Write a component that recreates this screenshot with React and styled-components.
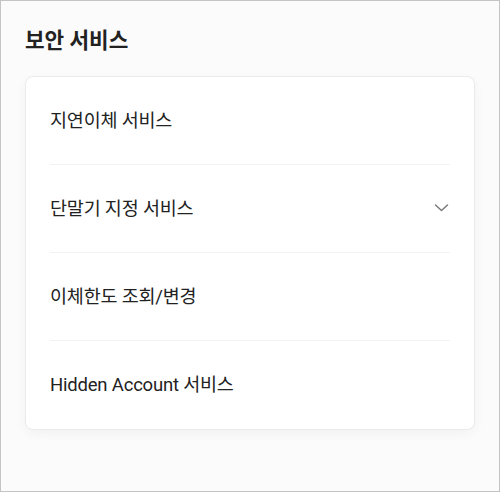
import React from "react";
import styled, { createGlobalStyle } from "styled-components";

const Global = createGlobalStyle`
  html, body { margin: 0; padding: 0; }
  body { font-family: Roboto, "Noto Sans CJK KR", sans-serif; color: #222; }
  * { box-sizing: border-box; }
`;

const Page = styled.div`
  width: 500px;
  height: 492px;
  border: 1px solid #c4c4c4;
  background: #fbfbfb;
  padding: 23px 24px 0 24px;
`;

const Title = styled.h2`
  margin: 0 0 19px 0;
  font-size: 21.3px;
  line-height: 33px;
  font-weight: 700;
  color: #222;
`;

const Card = styled.div`
  background: #fff;
  border: 1px solid #ebebeb;
  border-radius: 8px;
  box-shadow: 0 4px 12px rgba(0, 0, 0, 0.04);
  padding: 0 24px;
`;

const Row = styled.div`
  height: 88px;
  display: flex;
  align-items: center;
  justify-content: space-between;
  border-bottom: ${(p) => (p.$last ? "none" : "1px solid #f2f2f2")};
`;

const Label = styled.span`
  font-size: 18.5px;
  line-height: 24px;
  letter-spacing: -0.2px;
  color: #222;
`;

const Chevron = styled.svg`
  width: 17px;
  height: 17px;
  color: #7a7a7a;
  margin-top: -2px;
`;

const items = [
  { label: "지연이체 서비스" },
  { label: "단말기 지정 서비스", chevron: true },
  { label: "이체한도 조회/변경" },
  { label: "Hidden Account 서비스" },
];

export default function App() {
  return (
    <>
      <Global />
      <Page>
        <Title>보안 서비스</Title>
        <Card>
          {items.map((it, i) => (
            <Row key={i} $last={i === items.length - 1}>
              <Label>{it.label}</Label>
              {it.chevron && (
                <Chevron viewBox="0 0 17 17" fill="none">
                  <path d="M2.5 6 L8.5 11.5 L14.5 6" stroke="currentColor" strokeWidth="1.5" strokeLinecap="round" strokeLinejoin="round" />
                </Chevron>
              )}
            </Row>
          ))}
        </Card>
      </Page>
    </>
  );
}
